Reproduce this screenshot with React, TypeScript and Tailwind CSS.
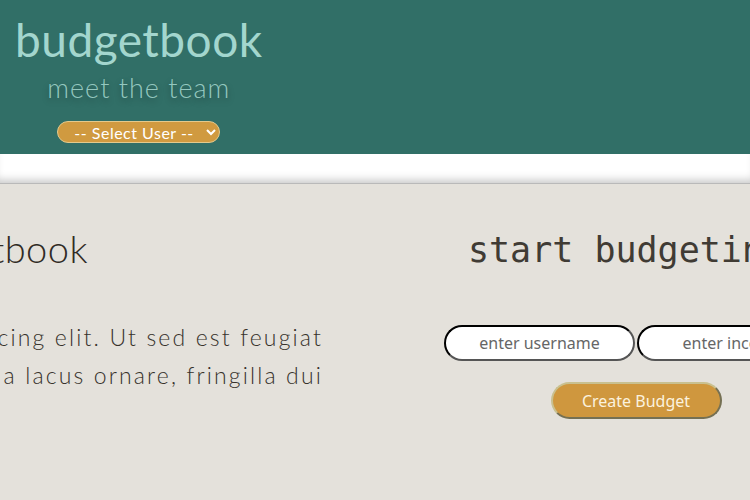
import { useState } from 'react';

const sans = "font-['Lato','Noto_Sans',sans-serif]";

export default function App() {
  const [user, setUser] = useState('');

  return (
    <div className="min-h-[500px] flex flex-col bg-[#e4e1db] overflow-hidden">
      {/* header */}
      <header className="bg-[#316f67] h-[154px] pl-[15px] pt-[12px]">
        <div className="w-fit flex flex-col items-center">
          <h1 className={`${sans} text-[46px] leading-[56px] text-[#a3d6ce] font-normal tracking-[0.5px]`}>budgetbook</h1>
          <p
            className={`${sans} text-[27px] leading-[32px] text-[#94c7bf] font-light tracking-[1px] mt-[4px] [text-shadow:0_3px_6px_rgba(0,0,0,0.35)]`}
          >
            meet the team
          </p>
          <select
            value={user}
            onChange={(e) => setUser(e.target.value)}
            className={`${sans} mt-[17px] w-[163px] h-[22px] rounded-full bg-[#d09a40] border border-[#e3c98c] text-white text-[16px] leading-[18px] tracking-[0.5px] pl-[12px] pr-[6px]`}
          >
            <option value="">-- Select User --</option>
          </select>
        </div>
      </header>

      {/* spacer band */}
      <div className="h-[30px] bg-white border-b border-[#b9b9b9] shadow-[inset_0_-8px_8px_-5px_rgba(0,0,0,0.22)]" />

      {/* main */}
      <main className="flex-1 flex justify-center gap-[50px] pt-[40px]">
        <section className="w-[472px] shrink-0 pr-[13px]">
          <h2 className={`${sans} text-[38px] leading-[48px] text-[#302b25] font-light tracking-[0.5px] pl-[23px]`}>budgetbook</h2>
          <div
            className={`${sans} flex flex-col items-end whitespace-nowrap text-[23px] leading-[38px] text-[#37322b] font-light tracking-[2.15px] mt-[46px]`}
          >
            <span>consectetur adipiscing elit. Ut sed est feugiat</span>
            <span>mattis, aliquam a lacus ornare, fringilla dui</span>
          </div>
        </section>

        <section className="w-[500px] shrink-0 flex flex-col items-center">
          <h2 className="font-['DejaVu_Sans_Mono',monospace] text-[35px] leading-[44px] text-[#403b34] pr-5 mt-[4px]">
            start budgeting
          </h2>
          <div className="flex gap-[2px] mt-[53px]">
            <input
              placeholder="enter username"
              className="font-['Noto_Sans',sans-serif] w-[191px] h-[36px] rounded-full bg-white border-2 [border-style:inset] border-[#555] text-center text-[16px] placeholder:text-[#666] outline-none"
            />
            <input
              placeholder="enter income"
              className="font-['Noto_Sans',sans-serif] w-[191px] h-[36px] rounded-full bg-white border-2 [border-style:inset] border-[#555] text-center text-[16px] placeholder:text-[#666] outline-none"
            />
          </div>
          <button className="font-['Noto_Sans',sans-serif] mt-[21px] w-[171px] h-[37px] rounded-full bg-[#cf973e] border-2 [border-style:outset] border-[#c9c08f] text-[#fbf2df] text-[16px]">
            Create Budget
          </button>
        </section>
      </main>
    </div>
  );
}
